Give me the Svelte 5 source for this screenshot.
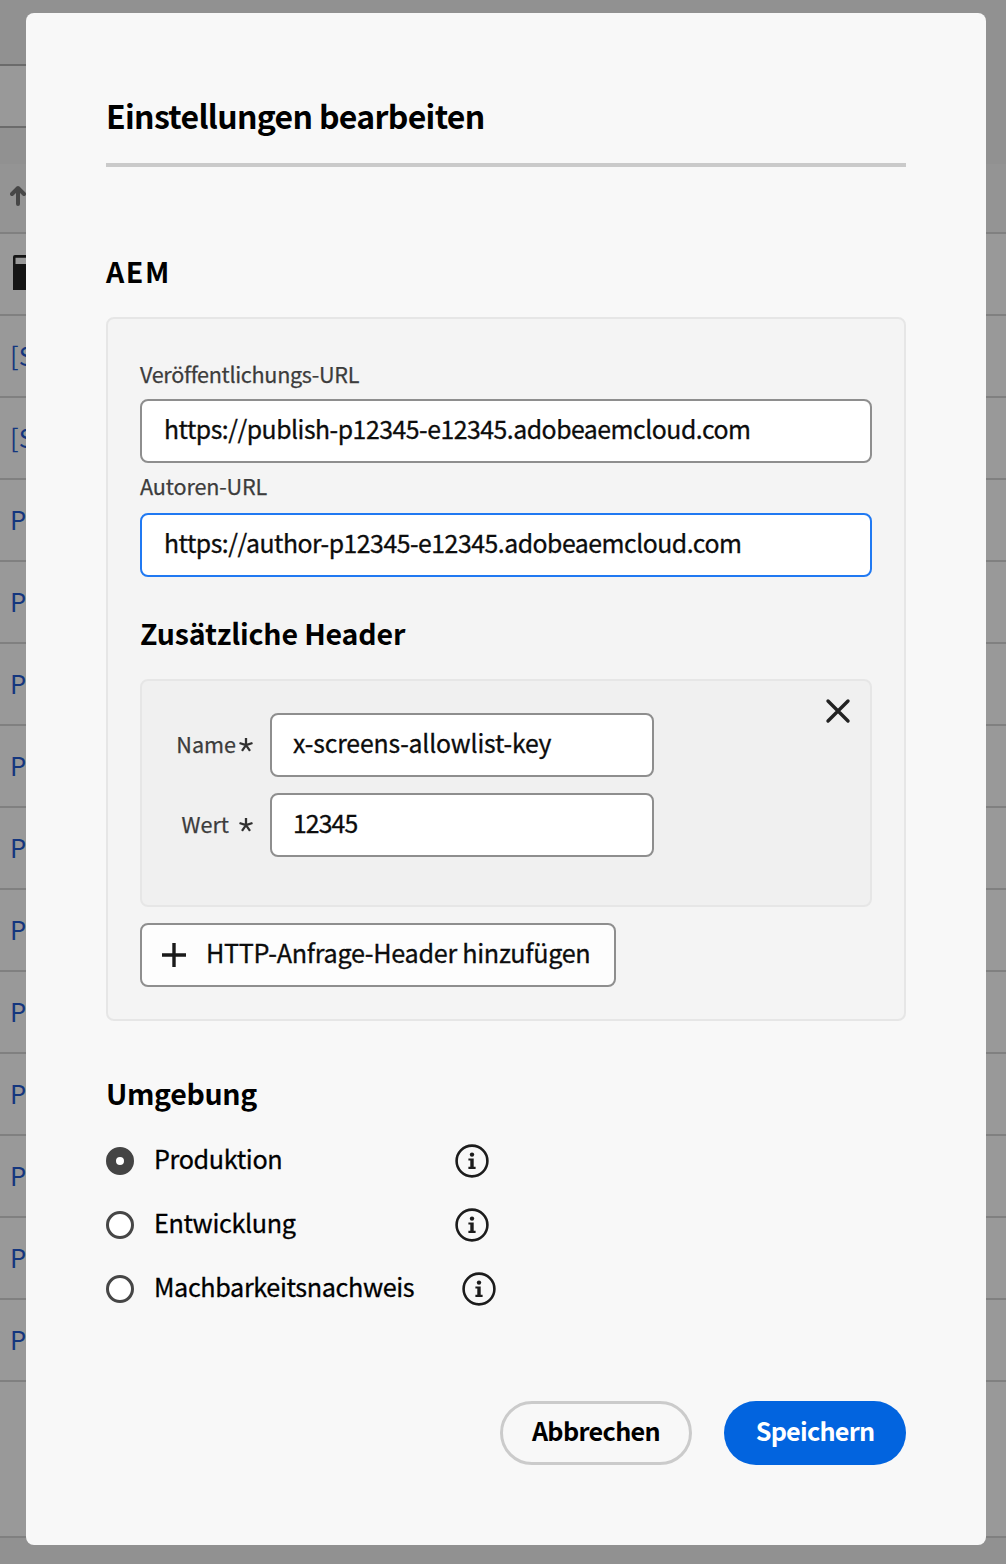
<script>
  const backgroundRows = ['[S', '[S', ...Array(11).fill('P')];

  const environments = [
    { id: 'prod', label: 'Produktion' },
    { id: 'dev', label: 'Entwicklung' },
    { id: 'poc', label: 'Machbarkeitsnachweis' }
  ];

  let environment = $state('prod');
  let publishUrl = $state('https://publish-p12345-e12345.adobeaemcloud.com');
  let authorUrl = $state('https://author-p12345-e12345.adobeaemcloud.com');
  let headerName = $state('x-screens-allowlist-key');
  let headerValue = $state('12345');
</script>

{#snippet asterisk()}
  <svg class="asterisk" viewBox="0 0 14 14" aria-hidden="true">
    <path d="M7 7.2V0M7 7.2L.5 5M7 7.2L13.5 5M7 7.2L3 12.8M7 7.2L11 12.8" />
  </svg>
{/snippet}

<div class="stage">
  <div class="backdrop" aria-hidden="true">
    <div class="topbar"></div>
    <div class="toolbar"></div>
    <div class="strip"></div>
    <div class="sortbar">
      <svg width="16" height="22" viewBox="0 0 16 22">
        <path d="M8 19V4M2 9L8 3L14 9" />
      </svg>
    </div>
    <div class="line icon-line">
      <svg width="36" height="36" viewBox="0 0 36 36">
        <path fill-rule="evenodd" d="M2 0H34A2 2 0 0 1 36 2V35H0V2A2 2 0 0 1 2 0ZM2.5 2.8V9H34V2.8Z" />
      </svg>
    </div>
    {#each backgroundRows as row}
      <div class="line">{row}</div>
    {/each}
    <div class="rest"></div>
  </div>

  <div class="modal" role="dialog" aria-labelledby="dialog-title">
    <h1 id="dialog-title">Einstellungen bearbeiten</h1>

    <h2 class="aem">AEM</h2>
    <section class="panel">
      <label class="caption publish" for="publish">Veröffentlichungs-URL</label>
      <input id="publish" class="url" bind:value={publishUrl} />
      <label class="caption author" for="author">Autoren-URL</label>
      <input id="author" class="url active" bind:value={authorUrl} />

      <h2 class="extra">Zusätzliche Header</h2>
      <div class="header-card">
        <div class="fields">
          <label class="key name" for="hname"><span>Name</span>{@render asterisk()}</label>
          <input id="hname" class="name-value" bind:value={headerName} />
          <label class="key" for="hvalue"><span>Wert</span>{@render asterisk()}</label>
          <input id="hvalue" class="number-value" bind:value={headerValue} />
        </div>
        <button class="close" aria-label="Schließen">
          <svg width="26" height="26" viewBox="0 0 26 26">
            <path d="M3 3L23 23M23 3L3 23" />
          </svg>
        </button>
      </div>

      <button class="add">
        <svg width="24" height="24" viewBox="0 0 24 24" aria-hidden="true">
          <path d="M12 0V24M0 12H24" />
        </svg>
        <span>HTTP-Anfrage-Header hinzufügen</span>
      </button>
    </section>

    <h2 class="env">Umgebung</h2>
    <div class="options">
      {#each environments as item}
        <div class="option">
          <label>
            <input type="radio" name="environment" value={item.id} bind:group={environment} />
            <span>{item.label}</span>
          </label>
          <svg class="info" width="34" height="34" viewBox="0 0 34 34" aria-hidden="true">
            <circle class="ring" cx="17" cy="17" r="15.4" />
            <circle cx="17" cy="10.6" r="2.2" />
            <path d="M13.4 14.4H18.7V22.8H20.6V25H13.4V22.8H15.3V16.6H13.4Z" />
          </svg>
        </div>
      {/each}
    </div>

    <footer>
      <button class="cancel"><span>Abbrechen</span></button>
      <button class="save"><span>Speichern</span></button>
    </footer>
  </div>
</div>

<style>
  :global(body) {
    margin: 0;
    background: #919191;
  }

  .stage,
  .stage * {
    box-sizing: border-box;
  }

  .stage {
    display: grid;
    width: 1006px;
    height: 1564px;
    overflow: hidden;
    font-family: 'Noto Sans CJK JP', 'Noto Sans', sans-serif;
    color: #000;
  }

  .backdrop,
  .modal {
    grid-area: 1 / 1;
  }

  /* Dimmed page behind the dialog */
  .backdrop {
    display: flex;
    flex-direction: column;
    background: #919191;
  }

  .topbar {
    height: 64px;
  }

  .toolbar {
    width: 500px;
    height: 64px;
    background: #999;
    border-top: 2px solid #6b6b6b;
    border-bottom: 2px solid #6b6b6b;
  }

  .strip {
    height: 36px;
  }

  .sortbar {
    height: 70px;
    padding: 21px 0 0 10px;
    background: #949494;
    border-bottom: 2px solid #808080;
  }

  .sortbar svg {
    display: block;
    fill: none;
    stroke: #474747;
    stroke-width: 4;
    stroke-linecap: round;
    stroke-linejoin: round;
  }

  .line {
    height: 82px;
    padding-left: 10px;
    background: #999;
    border-bottom: 2px solid #808080;
    font-size: 25.6px;
    line-height: 78px;
    color: #14367e;
  }

  .icon-line {
    padding: 21px 0 0 13px;
  }

  .icon-line svg {
    display: block;
    fill: #151515;
  }

  .rest {
    height: 156px;
    background: #999;
    border-bottom: 2px solid #808080;
  }

  .modal {
    width: 960px;
    height: 1532px;
    margin: 13px 0 0 26px;
    padding: 78px 80px 0;
    background: #f8f8f8;
    border-radius: 8px;
  }

  h1,
  h2 {
    margin: 0;
    font-weight: 700;
    white-space: nowrap;
  }

  h1 {
    padding-bottom: 24px;
    border-bottom: 4px solid #cacaca;
    font-size: 32px;
    line-height: 48px;
    letter-spacing: -0.68px;
  }

  h2 {
    font-size: 28.5px;
    line-height: 40px;
  }

  .aem {
    margin: 84px 0 26px;
    letter-spacing: 1.6px;
  }

  .panel {
    height: 704px;
    padding: 39px 32px 0;
    background: #f4f4f4;
    border: 2px solid #e6e6e6;
    border-radius: 8px;
  }

  .caption {
    display: block;
    font-size: 21.6px;
    line-height: 32px;
    color: #3c3c3c;
    -webkit-text-stroke: 0.25px #3c3c3c;
  }

  .publish {
    margin-bottom: 9px;
    letter-spacing: -0.32px;
  }

  .author {
    margin: 7px 0 11px;
    letter-spacing: -0.15px;
  }

  .panel input {
    display: block;
    width: 100%;
    height: 64px;
    margin-left: 0;
    padding: 0 20px 6px 22px;
    background: #fff;
    border: 2px solid #8e8e8e;
    border-radius: 8px;
    outline: none;
    font: 400 24.8px 'Noto Sans CJK JP', 'Noto Sans', sans-serif;
    color: #0c0c0c;
    -webkit-text-stroke: 0.3px #0c0c0c;
  }

  .panel .url {
    letter-spacing: -0.48px;
  }

  .panel .name-value {
    padding-left: 21px;
    letter-spacing: -0.17px;
  }

  .panel .number-value {
    padding-left: 21px;
    letter-spacing: -0.9px;
  }

  .panel .active {
    border-color: #2079f2;
  }

  .extra {
    margin: 36px 0 26px;
    letter-spacing: -0.15px;
  }

  .header-card {
    display: flex;
    justify-content: space-between;
    align-items: flex-start;
    height: 228px;
    padding: 17px 19px 0 0;
    background: #f0f0f0;
    border: 2px solid #e6e6e6;
    border-radius: 8px;
  }

  .fields {
    display: grid;
    grid-template-columns: 128px 384px;
    row-gap: 16px;
    padding-top: 15px;
  }

  .key {
    display: flex;
    justify-content: flex-end;
    align-items: center;
    gap: 10px;
    padding-right: 17px;
    font-size: 21.6px;
    line-height: 32px;
    color: #3c3c3c;
    -webkit-text-stroke: 0.25px #3c3c3c;
  }

  .key.name {
    gap: 3px;
  }

  .key span {
    padding-bottom: 2px;
  }

  .asterisk {
    width: 14px;
    height: 14px;
    fill: none;
    stroke: #303030;
    stroke-width: 2.3;
  }

  button {
    display: flex;
    align-items: center;
    margin: 0;
    padding: 0;
    background: none;
    border: 0;
    font-family: inherit;
    color: inherit;
  }

  button span {
    padding-bottom: 6px;
    line-height: 36px;
    white-space: nowrap;
  }

  .close svg {
    display: block;
    fill: none;
    stroke: #222;
    stroke-width: 3.4;
    stroke-linecap: round;
  }

  .add {
    gap: 20px;
    width: 476px;
    height: 64px;
    margin-top: 16px;
    padding-left: 20px;
    background: #fdfdfd;
    border: 2px solid #8e8e8e;
    border-radius: 8px;
    font-size: 25.2px;
    letter-spacing: -0.3px;
    color: #0c0c0c;
    -webkit-text-stroke: 0.3px #0c0c0c;
  }

  .add svg {
    fill: none;
    stroke: #1a1a1a;
    stroke-width: 3.4;
  }

  .env {
    margin: 52px 0 16px;
    letter-spacing: -0.35px;
  }

  .option {
    display: flex;
    align-items: center;
    height: 64px;
  }

  .option label {
    display: flex;
    align-items: center;
    gap: 20px;
    min-width: 301px;
    margin-right: 48px;
    font-size: 25.2px;
    line-height: 36px;
    letter-spacing: -0.37px;
    white-space: nowrap;
    -webkit-text-stroke: 0.3px #000;
  }

  .option label span {
    padding-bottom: 6px;
  }

  .option input {
    appearance: none;
    width: 28px;
    height: 28px;
    margin: 0;
    background: #fff;
    border: 3px solid #464646;
    border-radius: 50%;
  }

  .option input:checked {
    border-width: 10px;
    border-color: #444;
  }

  .info {
    fill: #1c1c1c;
  }

  .info .ring {
    fill: none;
    stroke: #1c1c1c;
    stroke-width: 2.6;
  }

  footer {
    display: flex;
    justify-content: flex-end;
    gap: 32px;
    margin-top: 80px;
  }

  footer button {
    justify-content: center;
    height: 64px;
    border-radius: 32px;
    font-size: 25.2px;
    font-weight: 700;
  }

  .cancel {
    width: 192px;
    border: 3px solid #cbcbcb;
    letter-spacing: -0.65px;
  }

  .save {
    width: 182px;
    background: #0264df;
    letter-spacing: -0.75px;
    color: #fff;
  }
</style>
